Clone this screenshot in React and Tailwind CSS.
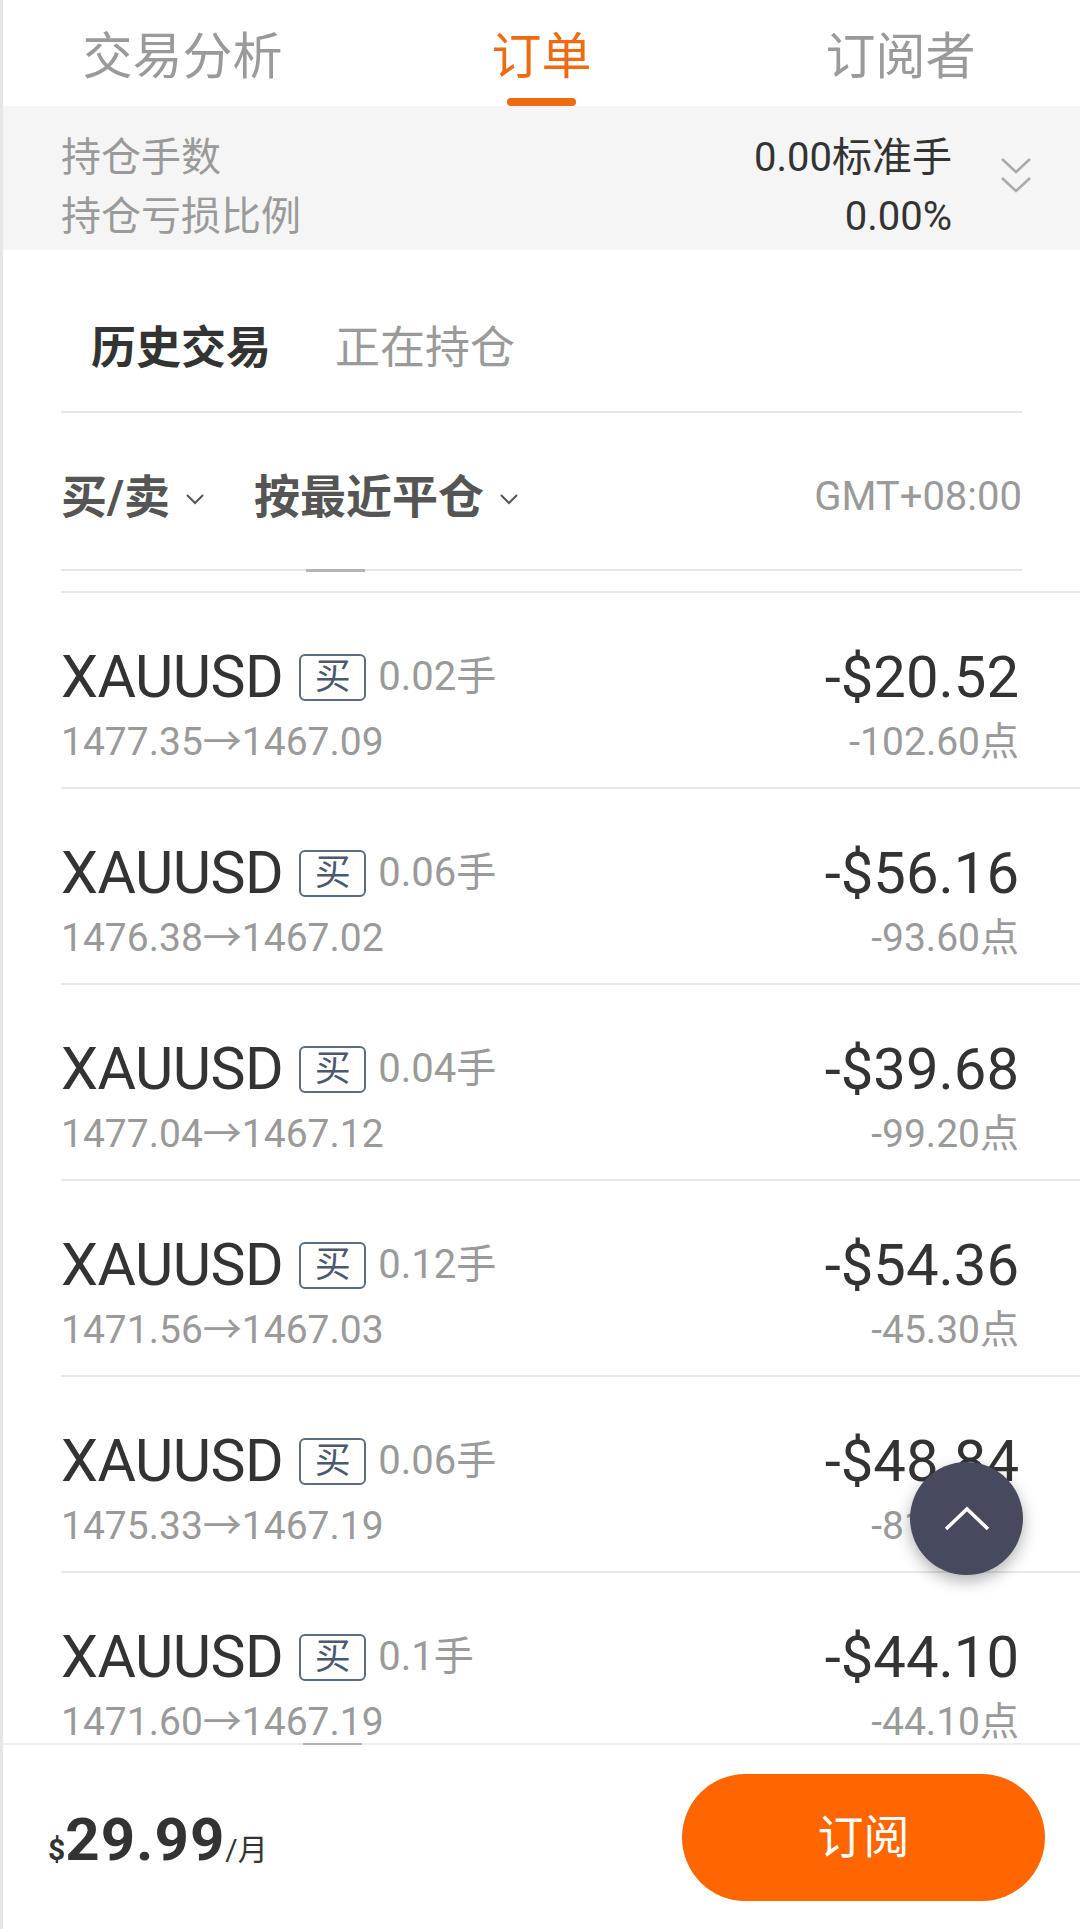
import React from 'react';

const orders = [
  { lots: '0.02手', open: '1477.35', close: '1467.09', pnl: '-$20.52', pts: '-102.60点' },
  { lots: '0.06手', open: '1476.38', close: '1467.02', pnl: '-$56.16', pts: '-93.60点' },
  { lots: '0.04手', open: '1477.04', close: '1467.12', pnl: '-$39.68', pts: '-99.20点' },
  { lots: '0.12手', open: '1471.56', close: '1467.03', pnl: '-$54.36', pts: '-45.30点' },
  { lots: '0.06手', open: '1475.33', close: '1467.19', pnl: '-$48.84', pts: '-81.40点' },
  { lots: '0.1手', open: '1471.60', close: '1467.19', pnl: '-$44.10', pts: '-44.10点' },
];

const font = "font-['Roboto','Noto_Sans_CJK_SC',sans-serif]";

const SmallChevron = () => (
  <svg width="22" height="14" viewBox="0 0 22 14" className="ml-[14px] mt-[4px]">
    <path d="M3 3 L11 11 L19 3" fill="none" stroke="#555" strokeWidth="2" />
  </svg>
);

const OrderRow = ({ o }) => (
  <div className="ml-[58px] h-[196px] pr-[61px] pt-[52px] border-b-[2px] border-[#e8e8e8] flex justify-between">
    <div className="flex flex-col">
      <div className="h-[64px] flex items-center">
        <span className="text-[59px] text-[#333] tracking-[-0.5px]">XAUUSD</span>
        <span className="ml-[16px] w-[67px] h-[47px] border-[2px] border-[#5b6b82] rounded-[6px] flex items-center justify-center text-[36px] text-[#4a5870] leading-none">
          买
        </span>
        <span className="ml-[12px] text-[40px] text-[#9a9a9a]">{o.lots}</span>
      </div>
      <div className="h-[50px] mt-[8px] flex items-center text-[39px] text-[#9a9a9a]">
        {o.open}→{o.close}
      </div>
    </div>
    <div className="flex flex-col items-end">
      <div className="h-[64px] flex items-center text-[58px] text-[#333]">{o.pnl}</div>
      <div className="h-[50px] mt-[8px] flex items-center text-[39px] text-[#9a9a9a]">{o.pts}</div>
    </div>
  </div>
);

const App = () => {
  return (
    <div className={`${font} relative w-[1080px] h-[1929px] bg-white flex flex-col overflow-hidden border-l-[3px] border-[#e6e6e6]`}>
      {/* Top tabs */}
      <div className="h-[106px] grid grid-cols-3 shrink-0">
        <div className="flex items-center justify-center pt-[8px] text-[50px] text-[#9a9a9a]">交易分析</div>
        <div className="flex flex-col items-center justify-end">
          <span className="text-[50px] text-[#f06a12] leading-none">订单</span>
          <div className="mt-[16px] w-[69px] h-[8px] rounded-full bg-[#f06a12]"></div>
        </div>
        <div className="flex items-center justify-center pt-[8px] text-[50px] text-[#9a9a9a]">订阅者</div>
      </div>

      {/* Position summary */}
      <div className="h-[144px] bg-[#f5f5f5] shrink-0 flex items-center pl-[58px] pr-[47px] pt-[18px]">
        <div className="flex-1 flex flex-col gap-[13px] text-[40px] text-[#9a9a9a] leading-[46px]">
          <div className="flex justify-between">
            <span>持仓手数</span>
            <span className="text-[#333]">0.00标准手</span>
          </div>
          <div className="flex justify-between">
            <span>持仓亏损比例</span>
            <span className="text-[#333]">0.00%</span>
          </div>
        </div>
        <svg width="34" height="40" viewBox="0 0 34 40" className="ml-[47px] -mt-[22px]">
          <path d="M3 3 L17 16 L31 3" fill="none" stroke="#aaa" strokeWidth="2.5" />
          <path d="M3 22 L17 35 L31 22" fill="none" stroke="#aaa" strokeWidth="2.5" />
        </svg>
      </div>

      {/* Sub tabs */}
      <div className="h-[161px] shrink-0 flex items-center pl-[88px] pt-[36px] text-[45px]">
        <span className="font-bold text-[#333]">历史交易</span>
        <span className="ml-[64px] text-[#9a9a9a]">正在持仓</span>
      </div>
      <div className="mx-[58px] h-[2px] bg-[#e6e6e6] shrink-0"></div>

      {/* Filters */}
      <div className="h-[156px] shrink-0 flex items-center px-[58px] pt-[12px]">
        <span className="font-bold text-[46px] text-[#555]">买/卖</span>
        <SmallChevron />
        <span className="ml-[48px] font-bold text-[46px] text-[#555]">按最近平仓</span>
        <SmallChevron />
        <span className="ml-auto text-[40px] text-[#9a9a9a]">GMT+08:00</span>
      </div>
      <div className="mx-[58px] h-[2px] bg-[#e6e6e6] shrink-0">
        <div className="ml-[245px] w-[59px] h-[3px] bg-[#b5b5b5]"></div>
      </div>
      <div className="h-[20px] shrink-0"></div>
      <div className="ml-[58px] h-[2px] bg-[#e8e8e8] shrink-0"></div>

      {/* Order list */}
      <div className="flex-1 overflow-hidden">
        {orders.map((o, i) => (
          <OrderRow key={i} o={o} />
        ))}
      </div>

      {/* Footer */}
      <div className="h-[186px] shrink-0 border-t-[2px] border-[#eeeeee] bg-white flex items-center justify-between pl-[45px] pr-[35px] relative">
        <div className="absolute -top-[2px] left-[300px] w-[59px] h-[2px] bg-[#b5b5b5]"></div>
        <div className="flex items-baseline text-[#333] font-bold pt-[6px]">
          <span className="text-[30px]">$</span>
          <span className="text-[60px] tracking-[1px]">29.99</span>
          <span className="text-[30px] font-normal">/月</span>
        </div>
        <button className="w-[363px] h-[127px] rounded-full bg-[#ff6600] text-white text-[46px] flex items-center justify-center">
          订阅
        </button>
      </div>

      {/* Scroll-to-top button */}
      <div className="absolute left-[907px] top-[1462px] w-[113px] h-[113px] rounded-full bg-[#474a5e] shadow-[0_6px_16px_rgba(0,0,0,0.3)] flex items-center justify-center">
        <svg width="48" height="26" viewBox="0 0 48 26">
          <path d="M3 23 L24 3 L45 23" fill="none" stroke="#fff" strokeWidth="3.5" />
        </svg>
      </div>
    </div>
  );
};

export default App;
